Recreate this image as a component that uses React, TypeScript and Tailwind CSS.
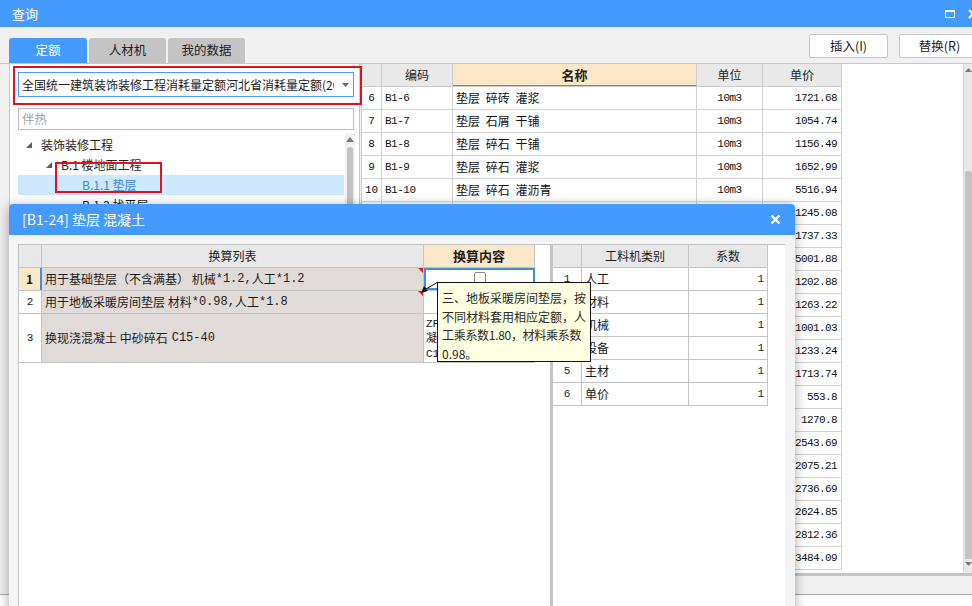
import React from 'react';

const UI = "font-['Noto_Sans_CJK_SC','Noto_Sans',sans-serif]";
const MONO = "font-['Liberation_Mono','Noto_Sans_CJK_SC',monospace]";

const quotaRows: [number, string, string, string][] = [
  [6, 'B1-6', '垫层 碎砖 灌浆', '1721.68'],
  [7, 'B1-7', '垫层 石屑 干铺', '1054.74'],
  [8, 'B1-8', '垫层 碎石 干铺', '1156.49'],
  [9, 'B1-9', '垫层 碎石 灌浆', '1652.99'],
  [10, 'B1-10', '垫层 碎石 灌沥青', '5516.94'],
  [11, 'B1-11', '垫层 砂石 人工级配', '1245.08'],
  [12, 'B1-12', '垫层 砂石 天然级配', '1737.33'],
  [13, 'B1-13', '垫层 毛石 灌沥青', '5001.88'],
  [14, 'B1-14', '垫层 毛石 干铺', '1202.88'],
  [15, 'B1-15', '垫层 毛石 灌浆', '1263.22'],
  [16, 'B1-16', '垫层 炉渣 干铺', '1001.03'],
  [17, 'B1-17', '垫层 炉渣 石灰拌和', '1233.24'],
  [18, 'B1-18', '垫层 炉渣 水泥拌和', '1713.74'],
  [19, 'B1-19', '垫层 砂', '553.8'],
  [20, 'B1-20', '垫层 灰土', '1270.8'],
  [21, 'B1-21', '垫层 三合土', '2543.69'],
  [22, 'B1-22', '垫层 陶粒混凝土', '2075.21'],
  [23, 'B1-23', '垫层 轻骨料混凝土', '2736.69'],
  [24, 'B1-24', '垫层 混凝土', '2624.85'],
  [25, 'B1-25', '垫层 泡沫混凝土', '2812.36'],
  [26, 'B1-26', '垫层 加气混凝土', '3484.09'],
];

const factorRows = ['人工', '材料', '机械', '设备', '主材', '单价'];

const TreeTri = () => (
  <svg width="6" height="6" className="shrink-0">
    <polygon points="6,0 6,6 0,6" fill="#5c5c5c" />
  </svg>
);

const RedCorner = () => (
  <svg width="5" height="5" className="absolute right-0 top-0">
    <polygon points="0,0 5,0 5,5" fill="#f01818" />
  </svg>
);

function LeftPanel() {
  return (
    <div className="w-[351px] h-full bg-white border-l border-r border-[#c8c8c8] flex flex-col">
      <div className="ml-[8px] mt-[8px] w-[336px] h-[25px] border border-[#4a9af5] flex items-center pl-[3px] pr-[4px]">
        <div className="flex-1 overflow-hidden whitespace-nowrap text-[12px] text-[#222]">
          全国统一建筑装饰装修工程消耗量定额河北省消耗量定额(2016)
        </div>
        <svg width="7" height="4" className="ml-[8px] shrink-0">
          <polygon points="0,0 7,0 3.5,4" fill="#6a6a6a" />
        </svg>
      </div>
      <div className="ml-[8px] mt-[11px] w-[336px] h-[22px] border border-[#bdbdbd] flex items-center pl-[3px] text-[12.5px] text-[#a0a0a0]">
        伴热
      </div>
      <div className="flex mt-[3px] flex-1 min-h-0">
        <div className="ml-[8px] w-[326px] pt-[2px] text-[12px] text-[#1e1e1e]">
          <div className="h-[20px] flex items-center pl-[8px] gap-[9px]">
            <TreeTri />
            <span>装饰装修工程</span>
          </div>
          <div className="h-[20px] flex items-center pl-[28px] gap-[9px]">
            <TreeTri />
            <span>B.1 楼地面工程</span>
          </div>
          <div className="h-[20px] flex items-center pl-[64px] bg-[#cce8ff] text-[#3a86e0]">B.1.1 垫层</div>
          <div className="h-[20px] flex items-center pl-[64px]">B.1.2 找平层</div>
          <div className="h-[20px] flex items-center pl-[64px]">B.1.3 整体面层</div>
        </div>
        <div className="ml-[1px] w-[10px] bg-[#f0f0f0] flex flex-col items-center">
          <svg width="8" height="5" className="mt-[4px]">
            <polygon points="0,5 8,5 4,0" fill="#7a7a7a" />
          </svg>
          <div className="mt-[5px] w-[6px] flex-1 bg-[#c2c2c2] rounded-full" />
        </div>
      </div>
    </div>
  );
}

function QuotaTable() {
  return (
    <div className="w-[481px] h-full bg-white border-l border-[#cccccc]">
      <div className="flex h-[23px] border-b border-[#cccccc] text-[12px] text-[#222]">
        <div className="w-[20px] bg-[#e9e9e9] border-r border-[#cccccc]" />
        <div className="w-[71px] bg-[#e9e9e9] border-r border-[#cccccc] flex items-center justify-center">编码</div>
        <div className="w-[244px] bg-[#fde7c9] border-r border-[#cccccc] border-b border-b-[#4a90e2] flex items-center justify-center text-[13px] font-bold">
          名称
        </div>
        <div className="w-[66px] bg-[#e9e9e9] border-r border-[#cccccc] flex items-center justify-center">单位</div>
        <div className="w-[79px] bg-[#e9e9e9] border-r border-[#cccccc] flex items-center justify-center">单价</div>
      </div>
      {quotaRows.map(([n, code, name, price]) => (
        <div key={n} className="flex h-[23px] border-b border-[#d2d2d2] text-[#111]">
          <div className={`w-[20px] border-r border-[#d2d2d2] flex items-center justify-center text-[11px] ${MONO}`}>{n}</div>
          <div className={`w-[71px] border-r border-[#d2d2d2] flex items-center pl-[3px] text-[11px] tracking-[-0.5px] ${MONO}`}>{code}</div>
          <div className="w-[244px] border-r border-[#d2d2d2] flex items-center pl-[3px] text-[12px] [word-spacing:3px] whitespace-nowrap overflow-hidden">
            {name}
          </div>
          <div className={`w-[66px] border-r border-[#d2d2d2] flex items-center justify-center text-[11px] tracking-[-0.5px] ${MONO}`}>10m3</div>
          <div className={`w-[79px] border-r border-[#d2d2d2] flex items-center justify-end pr-[4px] text-[11px] tracking-[-0.6px] ${MONO}`}>
            {price}
          </div>
        </div>
      ))}
    </div>
  );
}

function Dialog() {
  return (
    <div className={`absolute left-[9px] top-[204px] w-[786px] h-[420px] rounded-t-[4px] bg-[#f4f4f4] shadow-[0_2px_12px_rgba(0,0,0,0.35)] flex flex-col ${UI}`}>
      <div className="h-[31px] bg-[#449aff] rounded-t-[4px] flex items-center pl-[13px] pr-[10px] text-white">
        <span className="text-[14px]">[B1-24] 垫层 混凝土</span>
        <svg width="11" height="11" className="ml-auto mr-[4px]">
          <path d="M1.5 1.5 L9.5 9.5 M9.5 1.5 L1.5 9.5" stroke="#fff" strokeWidth="2.4" />
        </svg>
      </div>
      <div className="flex-1 flex pl-[9px] pt-[9px]">
        <div className="w-[535px] h-full bg-white border-l border-t border-[#c4c4c4] border-r-[3px] border-r-[#c4c4c4]">
          <div className="w-[516px] text-[12px] text-[#1c1c1c]">
            <div className="flex h-[23px] border-b border-[#c4c4c4]">
              <div className="w-[23px] bg-[#e8e8e8] border-r border-[#c4c4c4]" />
              <div className="w-[382px] bg-[#e8e8e8] border-r border-[#c4c4c4] flex items-center justify-center">换算列表</div>
              <div className="w-[111px] bg-[#fde7c9] border-r border-[#c4c4c4] flex items-center justify-center text-[13px] font-bold">换算内容</div>
            </div>
            <div className="flex h-[23px] border-b border-[#c4c4c4]">
              <div className="w-[23px] bg-[#fde7c9] border-r-2 border-[#3d8ee6] flex items-center justify-center font-bold">1</div>
              <div className="relative w-[382px] bg-[#e0dbd8] border-r border-[#c4c4c4] flex items-center pl-[3px] whitespace-nowrap">
                用于基础垫层（不含满基） 机械<span className={MONO}>*1.2,</span>人工<span className={MONO}>*1.2</span>
                <RedCorner />
              </div>
              <div className="w-[111px] bg-white border-2 border-[#3d8ee6] flex justify-center pt-[2px]">
                <div className="w-[12px] h-[12px] border border-[#8a8a8a] rounded-[2px] bg-white" />
              </div>
            </div>
            <div className="flex h-[23px] border-b border-[#c4c4c4]">
              <div className={`w-[23px] border-r border-[#c4c4c4] flex items-center justify-center text-[11px] ${MONO}`}>2</div>
              <div className="relative w-[382px] bg-[#e0dbd8] border-r border-[#c4c4c4] flex items-center pl-[3px] whitespace-nowrap">
                用于地板采暖房间垫层 材料<span className={MONO}>*0.98,</span>人工<span className={MONO}>*1.8</span>
                <RedCorner />
              </div>
              <div className="w-[111px] bg-white border-r border-[#c4c4c4]" />
            </div>
            <div className="flex h-[49px] border-b border-[#c4c4c4]">
              <div className={`w-[23px] border-r border-[#c4c4c4] flex items-center justify-center text-[11px] ${MONO}`}>3</div>
              <div className="w-[382px] bg-[#e0dbd8] border-r border-[#c4c4c4] flex items-center pl-[3px] whitespace-nowrap">
                换现浇混凝土 中砂碎石 <span className={`ml-[4px] ${MONO}`}>C15-40</span>
              </div>
              <div className={`w-[111px] border-r border-[#c4c4c4] pl-[2px] pt-[3px] text-[11px] leading-[15px] overflow-hidden whitespace-nowrap ${MONO}`}>
                <div>ZF1-0093 现浇</div>
                <div>凝土 中砂碎石</div>
                <div>C15-40</div>
              </div>
            </div>
          </div>
        </div>
        <div className="w-[232px] h-full bg-white border-t border-[#c4c4c4]">
          <div className="w-[215px] text-[12px] text-[#1c1c1c]">
            <div className="flex h-[23px] border-b border-[#c4c4c4] bg-[#e8e8e8]">
              <div className="w-[29px] border-r border-[#c4c4c4]" />
              <div className="w-[107px] border-r border-[#c4c4c4] flex items-center justify-center">工料机类别</div>
              <div className="w-[79px] border-r border-[#c4c4c4] flex items-center justify-center">系数</div>
            </div>
            {factorRows.map((name, i) => (
              <div key={name} className="flex h-[23px] border-b border-[#c4c4c4]">
                <div className={`w-[29px] border-r border-[#c4c4c4] flex items-center justify-center text-[11px] ${MONO}`}>{i + 1}</div>
                <div className="w-[107px] border-r border-[#c4c4c4] flex items-center pl-[3px]">{name}</div>
                <div className={`w-[79px] border-r border-[#c4c4c4] flex items-center justify-end pr-[3px] text-[11px] ${MONO}`}>1</div>
              </div>
            ))}
          </div>
        </div>
      </div>

      {/* comment pointer */}
      <svg width="30" height="20" className="absolute left-[410px] top-[76px]">
        <path d="M7 9 L19 2" stroke="#111" strokeWidth="1" />
        <polygon points="2,13 5,6 9,11" fill="#111" />
      </svg>
      <div className="absolute left-[428px] top-[78px] w-[154px] h-[80px] bg-[#ffffe1] border border-[#111] pl-[4px] pt-[6px] text-[12px] leading-[18.5px] text-[#2a2a2a] whitespace-nowrap">
        <div>三、地板采暖房间垫层，按</div>
        <div>不同材料套用相应定额，人</div>
        <div className="tracking-[-0.3px]">工乘系数1.80，材料乘系数</div>
        <div>0.98。</div>
      </div>
    </div>
  );
}

export default function App() {
  return (
    <div className={`relative w-[972px] h-[606px] overflow-hidden bg-[#f0f0f0] ${UI}`}>
      <div className="h-[27px] bg-[#449aff] flex items-center pl-[12px] text-white">
        <span className="text-[13px]">查询</span>
        <div className="ml-auto flex items-center gap-[13px] mr-[-6px]">
          <div className="w-[10px] h-[8px] border border-white border-t-2" />
          <svg width="10" height="10">
            <path d="M1 1 L9 9 M9 1 L1 9" stroke="#fff" strokeWidth="2" />
          </svg>
        </div>
      </div>

      <div className="flex h-[36px] pl-[9px]">
        <div className="flex gap-[2px] mt-[11px] h-[25px] text-[12.5px]">
          <div className="w-[78px] rounded-t-[3px] bg-[#449aff] text-white flex items-center justify-center">定额</div>
          <div className="w-[77px] rounded-t-[3px] bg-[#c4c4c4] text-[#222] flex items-center justify-center">人材机</div>
          <div className="w-[77px] rounded-t-[3px] bg-[#c4c4c4] text-[#222] flex items-center justify-center">我的数据</div>
        </div>
        <div className="ml-auto flex gap-[11px] mt-[7px] h-[24px] mr-[-8px] text-[12.5px] text-[#222]">
          <div className="w-[79px] bg-white border border-[#c6c6c6] rounded-[2px] flex items-center justify-center">插入(I)</div>
          <div className="w-[81px] bg-white border border-[#c6c6c6] rounded-[2px] flex items-center justify-center">替换(R)</div>
        </div>
      </div>

      <div className="flex h-[510px] pl-[9px] border-t border-[#c8c8c8]">
        <LeftPanel />
        <div className="w-[1px]" />
        <QuotaTable />
        <div className="flex-1 h-full bg-white" />
        <div className="w-[9px] h-full bg-[#e8e8e8] border-l border-[#dadada] flex flex-col items-center">
          <svg width="7" height="4" className="mt-[4px]">
            <polygon points="0,4 7,4 3.5,0" fill="#7a7a7a" />
          </svg>
          <div className="mt-[99px] w-[7px] h-[388px] bg-[#c4c4c4] rounded-t-[3px]" />
          <svg width="7" height="4" className="mt-[3px]">
            <polygon points="0,0 7,0 3.5,4" fill="#7a7a7a" />
          </svg>
        </div>
      </div>
      <div className="ml-[9px] h-[3px] bg-[#c4c4c4]" />
      <div className="h-[18px]" />
      <div className="h-px bg-[#a8a8a8]" />
      <div className="h-[20px] bg-white" />

      {/* highlight marks */}
      <div className="absolute left-[13px] top-[66px] w-[349px] h-[39px] border-2 border-[#e60f1e]" />
      <div className="absolute left-[55px] top-[162px] w-[107px] h-[31px] border-2 border-[#e60f1e]" />

      <Dialog />
    </div>
  );
}
